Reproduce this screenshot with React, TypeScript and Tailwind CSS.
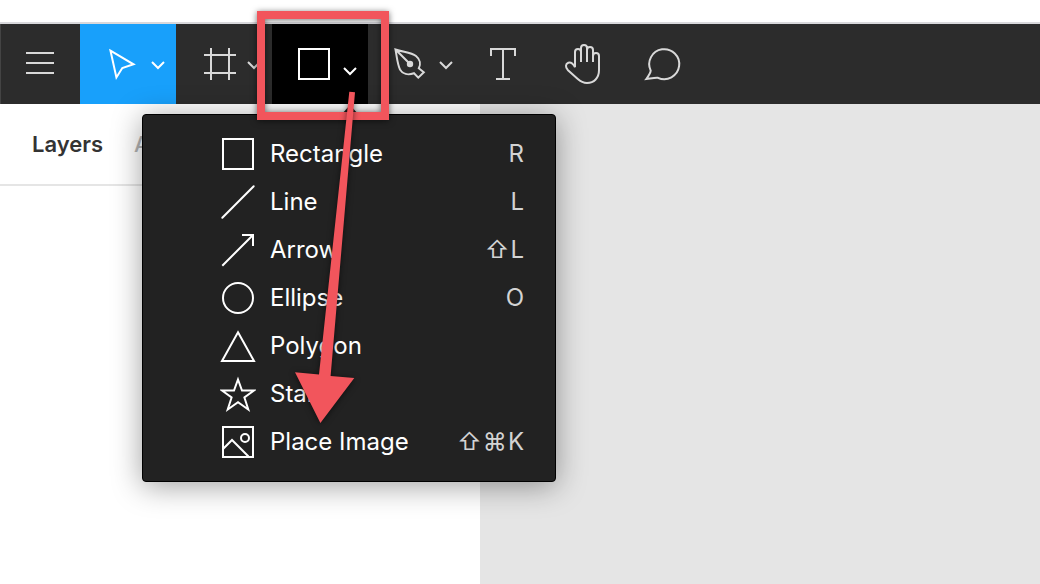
import type { ReactNode } from "react";

const INTER = "font-['Inter','Liberation_Sans',sans-serif]";

function Chevron({ className = "" }: { className?: string }) {
  return (
    <svg width="14" height="10" viewBox="0 0 14 10" fill="none" stroke="currentColor" strokeWidth="2" className={className}>
      <path d="M1 1 7 7 13 1" />
    </svg>
  );
}

function Tool({ className = "", children }: { className?: string; children: ReactNode }) {
  return <button className={`flex h-20 shrink-0 items-center ${className}`}>{children}</button>;
}

function Toolbar() {
  return (
    <div className="flex h-20 border-l border-[#444] bg-[#2c2c2c] text-[#d9d9d9]">
      <Tool className="w-[79px]">
        <svg width="79" height="80" viewBox="1 0 79 80" fill="none" stroke="currentColor" strokeWidth="2">
          <path d="M26 29h28M26 39h28M26 49h28" />
        </svg>
      </Tool>
      <Tool className="w-24 bg-[#18a0fb] text-white">
        <svg width="70" height="80" viewBox="0 0 70 80" fill="none" stroke="currentColor" strokeWidth="2">
          <path d="M30.5 26.7 53.5 40.3 42.3 44 36.4 53.5Z" />
        </svg>
        <Chevron className="mt-[3px] ml-px" />
      </Tool>
      <Tool className="w-24">
        <svg width="70" height="80" viewBox="0 0 70 80" fill="none" stroke="currentColor" strokeWidth="2">
          <path d="M35 24v32M53 24v32M28 31h32M28 49h32" />
        </svg>
        <Chevron className="mt-[3px] ml-px" />
      </Tool>
      <Tool className="w-24 bg-black text-white">
        <svg width="70" height="80" viewBox="0 0 70 80" fill="none" stroke="currentColor" strokeWidth="2">
          <rect x="27" y="25" width="30" height="30" />
        </svg>
        <Chevron className="mt-[15px] ml-px" />
      </Tool>
      <Tool className="w-24">
        <svg width="70" height="80" viewBox="0 0 70 80" fill="none" stroke="currentColor" strokeWidth="2">
          <path d="M27.5 25.5C35 28.2 43 28.3 48 32C52.3 35.5 52.8 40.5 50.8 44.2L55.8 48.3 50.3 53.6 46 49.2C40 51.4 34.5 50 32 45.5C29.5 40.5 29 34 27.5 25.5ZM27.5 25.5 42 40" />
          <circle cx="42" cy="40" r="3.2" fill="currentColor" stroke="none" />
        </svg>
        <Chevron className="mt-[3px] ml-px" />
      </Tool>
      <Tool className="w-20">
        <svg width="80" height="80" viewBox="0 0 80 80" fill="none" stroke="currentColor" strokeWidth="2">
          <path d="M27 32v-7h24v7M39 25v30M32 55h14" />
        </svg>
      </Tool>
      <Tool className="w-20">
        <svg width="80" height="80" viewBox="0 0 80 80" fill="none" stroke="currentColor" strokeWidth="2">
          <path d="M31 43.2V28a3 3 0 0 1 6 0V38M37 38V24a3 3 0 0 1 6 0V38M43 38V26a3 3 0 0 1 6 0V38M49 38V32a3 3 0 0 1 6 0V46C55 54 50 59 43 59C38.5 59 36.5 57.5 33.5 54.8L24 46.3C21 43.3 21.5 39.8 24.3 38.7C27.5 37.7 29.5 40.5 31 43.2" />
        </svg>
      </Tool>
      <Tool className="w-20">
        <svg width="80" height="80" viewBox="0 0 80 80" fill="none" stroke="currentColor" strokeWidth="2">
          <path d="M22.3 55C25.3 51 26.7 48.5 26.7 46.6A15 15 0 1 1 34 53.8C30.5 53.5 26.5 54.5 22.3 55Z" />
        </svg>
      </Tool>
    </div>
  );
}

const shapes: { label: string; keys: string[]; icon: ReactNode }[] = [
  { label: "Rectangle", keys: ["R"], icon: <rect x="3" y="3" width="30" height="30" /> },
  { label: "Line", keys: ["L"], icon: <path d="M2.3 33.7 33.7 2.3" strokeLinecap="round" /> },
  { label: "Arrow", keys: ["⇧", "L"], icon: <path d="M2.3 33.7 33 3M22 3h11v11" /> },
  { label: "Ellipse", keys: ["O"], icon: <circle cx="18" cy="18" r="15" /> },
  { label: "Polygon", keys: [], icon: <path d="M18 4.2 34 33H2Z" /> },
  {
    label: "Star",
    keys: [],
    icon: <path d="M18 3.5 22 14.5 34 14.5 24.4 21.5 28.3 33.5 18 26.3 7.7 33.5 11.6 21.5 2 14.5 14 14.5Z" />,
  },
  {
    label: "Place Image",
    keys: ["⇧", "⌘", "K"],
    icon: (
      <>
        <rect x="3" y="3" width="30" height="30" />
        <path d="M3 25 12 16 28.5 32.5" />
        <circle cx="25" cy="14" r="4" />
      </>
    ),
  },
];

function ShapeMenu() {
  return (
    <div className="absolute top-[114px] left-[142px] h-[368px] w-[414px] rounded-[4px] border border-black bg-[#222] pt-[15px] text-2xl shadow-[0_4px_30px_rgba(0,0,0,0.38)]">
      <svg width="18" height="10" viewBox="0 0 18 10" className="absolute -top-[10px] left-[198px]">
        <path d="M9 0 18 10H0Z" fill="#222" />
      </svg>
      {shapes.map((s) => (
        <div key={s.label} className="flex h-12 items-center pr-[31px] pl-[77px]">
          <svg width="36" height="36" viewBox="0 0 36 36" fill="none" stroke="#fff" strokeWidth="2" className="shrink-0">
            {s.icon}
          </svg>
          <span className="ml-[14px] leading-none text-white">{s.label}</span>
          <span className="ml-auto flex gap-px leading-none text-[#d3d3d3]">
            {s.keys.map((k) => (
              <span key={k}>{k}</span>
            ))}
          </span>
        </div>
      ))}
    </div>
  );
}

export default function App() {
  return (
    <div className={`relative flex h-[584px] w-[1040px] flex-col overflow-hidden bg-white ${INTER}`}>
      <div className="h-6 shrink-0 border-b-2 border-[#d8d8dc]" />
      <Toolbar />
      <div className="flex grow">
        <div className="w-[480px]">
          <div className="flex h-[82px] items-center gap-[31px] border-b-2 border-[#e5e5e5] pl-8 text-[22px] leading-none font-semibold">
            <span className="text-[#333]">Layers</span>
            <span className="font-medium text-[#b3b3b3]">Assets</span>
          </div>
        </div>
        <div className="grow bg-[#e5e5e5]" />
      </div>
      <ShapeMenu />
      <div className="absolute top-[11px] left-[257px] h-[109px] w-[132px] border-8 border-[#f2555c] drop-shadow-[0_1px_3px_rgba(0,0,0,0.55)]" />
      <svg
        width="100"
        height="350"
        viewBox="280 85 100 350"
        className="absolute top-[85px] left-[280px] drop-shadow-[0_1px_3px_rgba(0,0,0,0.55)]"
      >
        <path d="M349.3 91.7 355 92.2 330.6 376 354.3 378 320.4 423 295 372.3 319 374.5Z" fill="#f2555c" />
      </svg>
    </div>
  );
}
